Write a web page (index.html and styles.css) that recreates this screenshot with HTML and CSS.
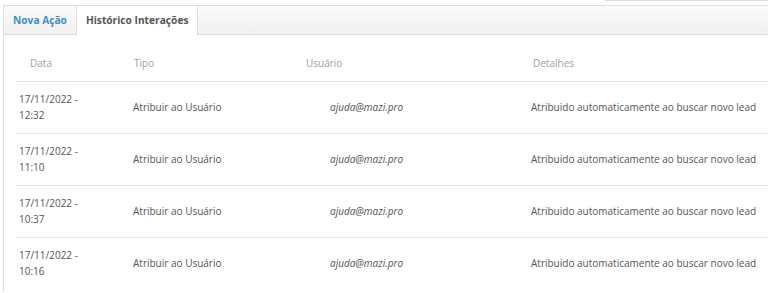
FILE: index.html
```html
<!DOCTYPE html>
<html lang="pt-BR">
<head>
    <meta charset="UTF-8">
    <meta name="viewport" content="width=device-width, initial-scale=1.0">
    <title>Histórico Interações</title>
    <link rel="stylesheet" href="styles.css">
</head>
<body>
    <div class="top-strip">
        <div class="top-strip-box"></div>
    </div>
    <div class="panel">
        <ul class="tabs">
            <li class="tab">Nova Ação</li>
            <li class="tab active">Histórico Interações</li>
        </ul>
        <div class="tab-content">
            <table class="history">
                <colgroup>
                    <col class="col-date">
                    <col class="col-type">
                    <col class="col-user">
                    <col class="col-details">
                </colgroup>
                <thead>
                    <tr>
                        <th class="th-date">Data</th>
                        <th>Tipo</th>
                        <th>Usuário</th>
                        <th class="th-details">Detalhes</th>
                    </tr>
                </thead>
                <tbody>
                    <tr>
                        <td>17/11/2022 -<br>12:32</td>
                        <td>Atribuir ao Usuário</td>
                        <td class="user">ajuda@mazi.pro</td>
                        <td>Atribuido automaticamente ao buscar novo lead</td>
                    </tr>
                    <tr>
                        <td>17/11/2022 -<br>11:10</td>
                        <td>Atribuir ao Usuário</td>
                        <td class="user">ajuda@mazi.pro</td>
                        <td>Atribuido automaticamente ao buscar novo lead</td>
                    </tr>
                    <tr>
                        <td>17/11/2022 -<br>10:37</td>
                        <td>Atribuir ao Usuário</td>
                        <td class="user">ajuda@mazi.pro</td>
                        <td>Atribuido automaticamente ao buscar novo lead</td>
                    </tr>
                    <tr>
                        <td>17/11/2022 -<br>10:16</td>
                        <td>Atribuir ao Usuário</td>
                        <td class="user">ajuda@mazi.pro</td>
                        <td>Atribuido automaticamente ao buscar novo lead</td>
                    </tr>
                </tbody>
            </table>
        </div>
    </div>
</body>
</html>
```

FILE: styles.css
```css
body {
    margin: 0;
    font-family: 'Open Sans', 'Liberation Sans', sans-serif;
    background-color: #fff;
    overflow: hidden;
    color: #555;
}
.top-strip {
    display: flex;
    justify-content: flex-end;
    height: 1px;
}
.top-strip-box {
    width: 163px;
    border-bottom: 1px solid #ddd;
}
.panel {
    margin: 4px -20px 0 3px;
    border-left: 1px solid #ddd;
    border-top: 1px solid #ddd;
    background-color: #fff;
}
.tabs {
    display: flex;
    margin: 0;
    padding: 0;
    list-style: none;
    height: 28px;
    background: linear-gradient(#fbfbfb, #f1f1f1);
    border-bottom: 1px solid #dcdcdc;
}
.tab {
    padding: 0 9px;
    line-height: 28px;
    font-size: 10.2px;
    font-weight: bold;
    color: #3d8fc9;
}
.tab.active {
    background-color: #fff;
    color: #555;
    border-left: 1px solid #ddd;
    border-right: 1px solid #ddd;
    height: 29px;
}
.tab-content {
    padding: 10px 0 3px 11px;
}
.history {
    border-collapse: collapse;
    table-layout: fixed;
    width: 773px;
    font-size: 10px;
}
.col-date { width: 114px; }
.col-type { width: 172px; }
.col-user { width: 226px; }
.history th {
    height: 36px;
    text-align: left;
    font-weight: normal;
    color: #a0a0a0;
    padding: 0 0 0 5px;
    border-bottom: 1px solid #e6e6e6;
}
.history th.th-date {
    padding-left: 15px;
}
.history th.th-details {
    padding-left: 6px;
}
.history td {
    padding: 9px 0 10px 4px;
    line-height: 16px;
    border-bottom: 1px solid #e6e6e6;
    vertical-align: middle;
}
.history tr:last-child td {
    border-bottom: none;
}
.history td.user {
    padding-left: 29px;
    font-style: italic;
}
```
